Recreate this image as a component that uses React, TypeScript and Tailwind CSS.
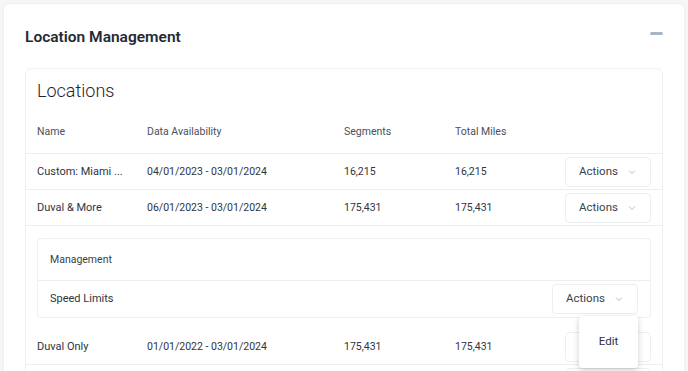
import React from "react";

const font = { fontFamily: "Roboto, 'Open Sans', 'Liberation Sans', sans-serif" };

const rows = [
  { name: "Custom: Miami ...", range: "04/01/2023 - 03/01/2024", segments: "16,215", miles: "16,215" },
  { name: "Duval & More", range: "06/01/2023 - 03/01/2024", segments: "175,431", miles: "175,431", expanded: true },
  { name: "Duval Only", range: "01/01/2022 - 03/01/2024", segments: "175,431", miles: "175,431" },
  { name: "Duval County", range: "01/01/2022 - 03/01/2024", segments: "175,431", miles: "175,431" },
];

const Chevron = () => (
  <svg width="8" height="6" viewBox="0 0 8 6" fill="none" className="ml-[10px]">
    <path d="M1 1.5 L4 4.5 L7 1.5" stroke="#b3bbc6" strokeWidth="1" />
  </svg>
);

const ActionsButton: React.FC<{ open?: boolean }> = ({ open }) => (
  <div className="relative">
    <div className="flex h-[30px] w-[86px] items-center rounded-[4px] border border-[#eceef2] bg-white pl-[13px] text-[11.5px] text-[#3a3f4a]">
      Actions
      <Chevron />
    </div>
    {open && (
      <div className="absolute right-0 top-[32px] z-10 flex h-[52px] w-[59px] items-center justify-center rounded-[4px] bg-white text-[11.5px] text-[#2d323c] shadow-[0_2px_6px_rgba(0,0,0,0.2)]">
        Edit
      </div>
    )}
  </div>
);

const gridCols = "grid grid-cols-[110px_197px_111px_1fr_auto] items-center";

const Row: React.FC<{ row: (typeof rows)[number] }> = ({ row }) => (
  <>
    <div className={`${gridCols} h-[36px] border-b border-[#eceef1] px-[11px] pt-[1px] text-[11px] text-[#2f3440]`}>
      <div className="truncate">{row.name}</div>
      <div className="text-[10.5px]">{row.range}</div>
      <div className="text-[10.5px]">{row.segments}</div>
      <div className="text-[10.5px]">{row.miles}</div>
      <ActionsButton />
    </div>
    {row.expanded && (
      <div className="px-[11px] pb-[11px] pt-[12px]">
        <div className="rounded-[4px] border border-[#eef0f3]">
          <div className="flex h-[42px] items-center border-b border-[#eceef1] px-3 text-[10.5px] text-[#3a3f4a]">
            Management
          </div>
          <div className="flex h-[36px] items-center justify-between pl-3 pr-[12px] text-[11px] text-[#2f3440]">
            <span>Speed Limits</span>
            <ActionsButton open />
          </div>
        </div>
      </div>
    )}
  </>
);

export default function App() {
  return (
    <div className="h-[371px] overflow-hidden bg-[#f5f6f8] p-[3px]" style={font}>
      <div className="h-[420px] rounded-[6px] border border-[#eef0f3] bg-white px-[21px]">
        <div className="flex h-[64px] items-center justify-between pt-[3px]">
          <h1 className="text-[15.5px] font-semibold text-[#242a35]">Location Management</h1>
          <div className="mb-[9px] h-[3px] w-[13px] rounded-full bg-[#aab5c4]" />
        </div>
        <div className="rounded-[6px] border border-[#eef0f3]">
          <div className="px-[11px] pt-[8px] text-[18px] font-light leading-[28px] text-[#1f2430]">Locations</div>
          <div className={`${gridCols} h-[49px] border-b border-[#eceef1] px-[11px] pt-[6px] text-[10.5px] text-[#4a505c]`}>
            <div>Name</div>
            <div>Data Availability</div>
            <div>Segments</div>
            <div>Total Miles</div>
            <div className="w-[86px]" />
          </div>
          {rows.map((r) => (
            <Row key={r.name} row={r} />
          ))}
        </div>
      </div>
    </div>
  );
}
